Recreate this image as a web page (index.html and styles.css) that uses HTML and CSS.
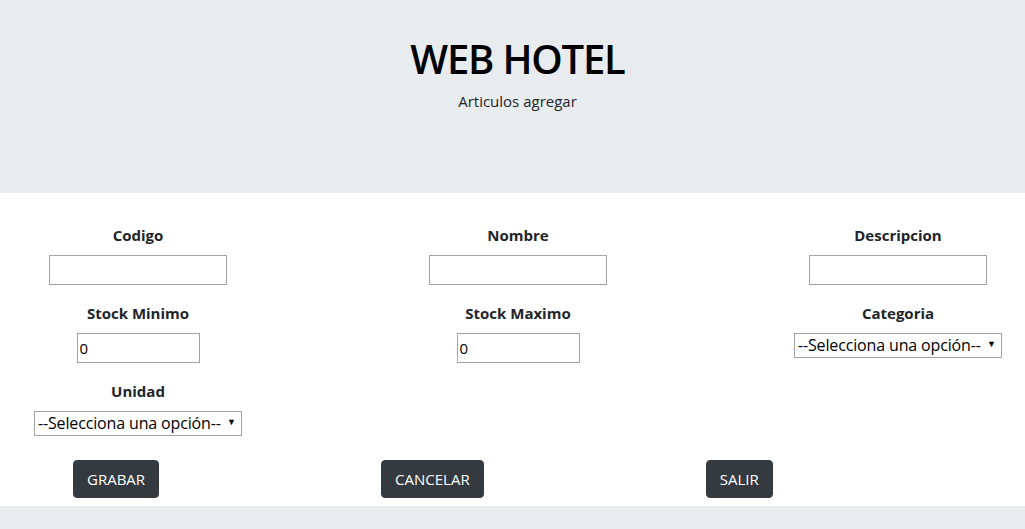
FILE: index.html
```html
<!DOCTYPE html>
<html lang="es">
<head>
<meta charset="utf-8">
<title>WEB HOTEL</title>
<link rel="stylesheet" href="styles.css">
</head>
<body>
<header class="jumbotron">
  <h1 class="title">WEB HOTEL</h1>
  <p class="subtitle">Articulos agregar</p>
</header>
<form class="form">
  <div class="grid">
    <div class="field">
      <label class="label" for="codigo">Codigo</label>
      <input class="input input-wide" id="codigo" type="text">
    </div>
    <div class="field">
      <label class="label" for="nombre">Nombre</label>
      <input class="input input-wide" id="nombre" type="text">
    </div>
    <div class="field">
      <label class="label" for="descripcion">Descripcion</label>
      <input class="input input-wide" id="descripcion" type="text">
    </div>
    <div class="field">
      <label class="label" for="smin">Stock Minimo</label>
      <input class="input input-narrow" id="smin" type="text" value="0">
    </div>
    <div class="field">
      <label class="label" for="smax">Stock Maximo</label>
      <input class="input input-narrow" id="smax" type="text" value="0">
    </div>
    <div class="field">
      <label class="label" for="cat">Categoria</label>
      <span class="select-wrap">
        <select class="select" id="cat"><option>--Selecciona una opción--</option></select>
      </span>
    </div>
    <div class="field">
      <label class="label" for="uni">Unidad</label>
      <span class="select-wrap">
        <select class="select" id="uni"><option>--Selecciona una opción--</option></select>
      </span>
    </div>
  </div>
  <div class="actions">
    <button class="btn" type="button">GRABAR</button>
    <button class="btn" type="button">CANCELAR</button>
    <button class="btn" type="button">SALIR</button>
  </div>
</form>
<footer class="footer"></footer>
</body>
</html>
```
FILE: styles.css
```css
* { box-sizing: border-box; }
html, body { margin: 0; padding: 0; }
body {
  font-family: "Open Sans", "Noto Sans", sans-serif;
  font-size: 16px;
  line-height: 1.5;
  color: #212529;
  background: #fff;
  overflow: hidden;
}
.jumbotron {
  background: #e9ecef;
  height: 193px;
  padding-top: 35px;
  padding-left: 10px;
  text-align: center;
}
.title {
  margin: 0 0 6px;
  font-size: 40px;
  font-weight: 600;
  line-height: 48px;
  color: #000;
  letter-spacing: -1.2px;
}
.subtitle {
  margin: 0;
  font-size: 15px;
  line-height: 24px;
  color: #212529;
}
.form { padding-top: 30px; }
.grid {
  display: grid;
  grid-template-columns: repeat(3, 240px);
  column-gap: 140px;
  row-gap: 16px;
  padding-left: 18px;
  align-items: start;
}
.field {
  display: flex;
  flex-direction: column;
  align-items: center;
}
.label {
  font-weight: 700;
  font-size: 15px;
  line-height: 24px;
  margin-bottom: 8px;
  color: #212529;
}
.input {
  height: 30px;
  border: 1px solid #a3a3a3;
  font: inherit;
  font-size: 15px;
  padding: 0 2px;
  color: #000;
  background: #fff;
}
.input-wide { width: 178px; }
.input-narrow { width: 123px; }
.select-wrap {
  position: relative;
  display: inline-block;
}
.select-wrap::after {
  content: "\25BC";
  position: absolute;
  right: 6px;
  top: 5px;
  font-size: 9px;
  line-height: 12px;
  color: #000;
  pointer-events: none;
}
.select {
  appearance: none;
  -webkit-appearance: none;
  width: 208px;
  height: 25px;
  border: 1px solid #a3a3a3;
  border-radius: 0;
  background: #fff;
  font: inherit;
  font-size: 16px;
  letter-spacing: -0.15px;
  line-height: 21px;
  padding: 0 18px 0 3px;
  color: #000;
}
.actions {
  display: flex;
  gap: 222px;
  padding-left: 73px;
  margin-top: 24px;
}
.btn {
  background: #343a40;
  color: #fff;
  border: 1px solid #343a40;
  border-radius: 4px;
  font: inherit;
  font-size: 15px;
  line-height: 24px;
  padding: 6px 13px;
  height: 38px;
  cursor: pointer;
}
.footer {
  background: #e9ecef;
  height: 40px;
  margin-top: 8px;
}
```
